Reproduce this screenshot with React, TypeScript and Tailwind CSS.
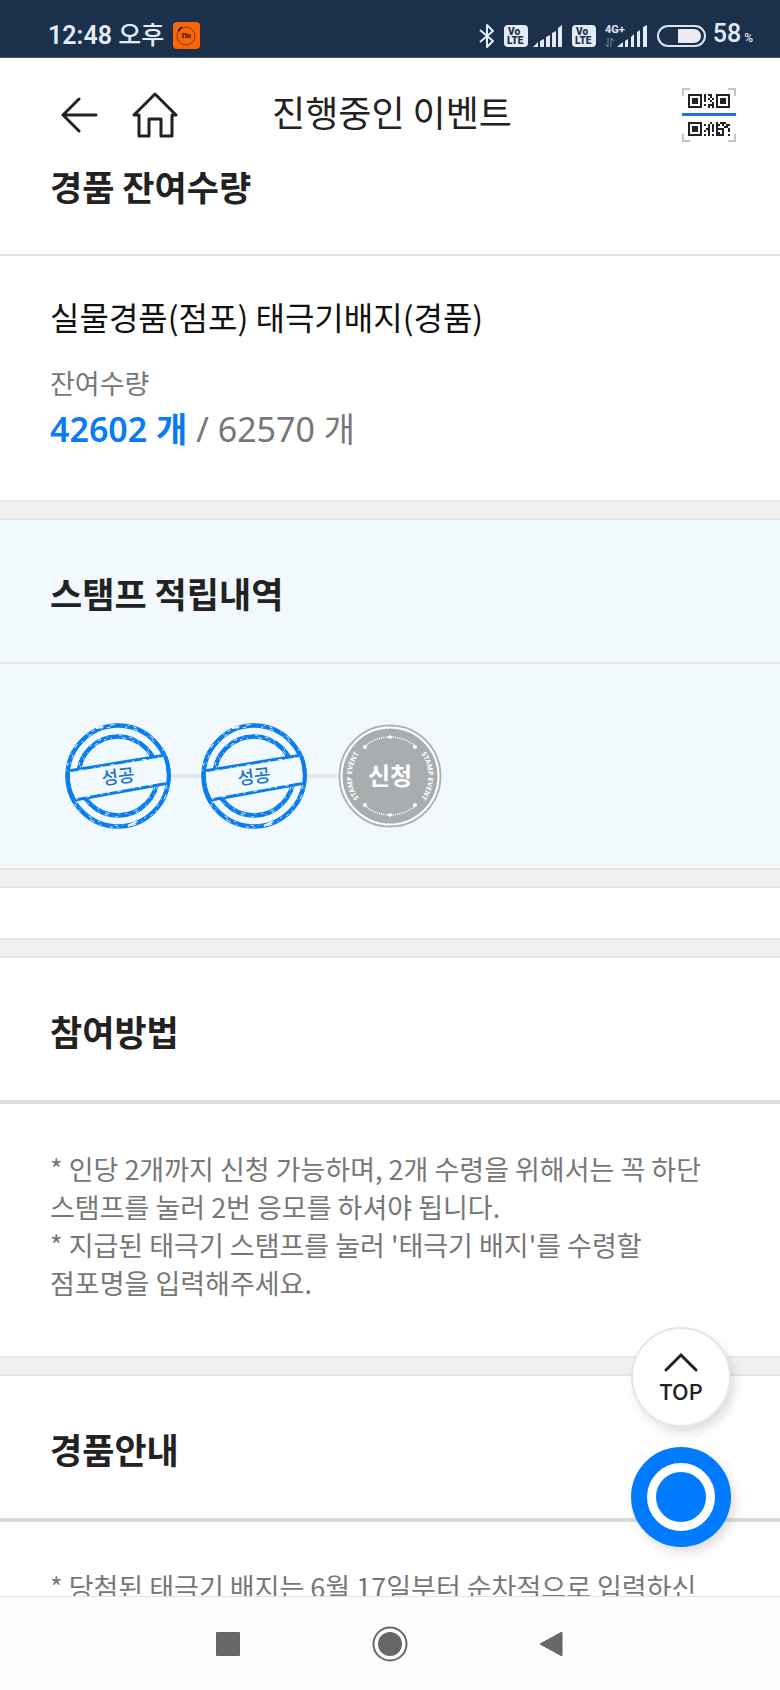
import React from 'react';

const QR_TOP = ['#.##.', '#..#.', '#.#.#', '#..#.', '....#', '#.###', '..#.#'];
const QR_BOTTOM = [
  '...#..#.###..',
  '#.#.#.##.#.##',
  '..#.#.#...##.',
  '.##.#.####..#',
  '#.#.#.#..#..#',
  '..#...##.#...',
  '#.#.#.####..#',
];

function modules(rows: string[], x: number, y: number) {
  return rows.flatMap((row, r) =>
    row
      .split('')
      .map((cell, c) =>
        cell === '#' ? (
          <rect key={`${r}-${c}`} x={x + c * 2} y={y + r * 2} width="2" height="2" />
        ) : null
      )
  );
}

function Finder({ x, y }: { x: number; y: number }) {
  return (
    <g>
      <rect x={x + 1} y={y + 1} width="12" height="12" fill="none" stroke="#222" strokeWidth="2" />
      <rect x={x + 4} y={y + 4} width="6" height="6" />
    </g>
  );
}

function QrIcon() {
  return (
    <svg width="54" height="54" viewBox="0 0 54 54" fill="#222">
      <path
        d="M8 1H1V8M46 1H53V8M8 53H1V46M46 53H53V46"
        fill="none"
        stroke="#c4c4c4"
        strokeWidth="2"
      />
      <Finder x={6} y={6} />
      <Finder x={34} y={6} />
      <Finder x={6} y={34} />
      {modules(QR_TOP, 22, 6)}
      {modules(QR_BOTTOM, 22, 34)}
      <rect x="0" y="25" width="54" height="3" fill="#1c75d8" />
    </svg>
  );
}

function BluetoothIcon() {
  return (
    <svg width="16" height="26" viewBox="0 0 16 26" fill="none" stroke="#e3ebf8" strokeWidth="2">
      <path d="M1 7L14 18L8 24V2L14 8L1 19" strokeLinejoin="round" />
    </svg>
  );
}

function VolteIcon() {
  return (
    <svg width="24" height="22" viewBox="0 0 24 22" fontFamily="Roboto, sans-serif" fontWeight="900">
      <rect width="24" height="22" rx="4" fill="#e3ebf8" />
      <text x="4" y="10" fontSize="10" fill="#1b304b">Vo</text>
      <text x="3" y="19" fontSize="10" fill="#1b304b">LTE</text>
    </svg>
  );
}

function SignalIcon() {
  return (
    <svg width="30" height="22" viewBox="0 0 30 22" fill="#e3ebf8">
      <path d="M0 22L5 17V22ZM7 16L11 14V22H7ZM13 12L17 10V22H13ZM19 8L23 6V22H19ZM25 3L29 0V22H25Z" />
    </svg>
  );
}

function BatteryIcon() {
  return (
    <svg width="50" height="24" viewBox="0 0 50 24">
      <rect x="1" y="2" width="47" height="20" rx="10" fill="none" stroke="#d9e3f3" strokeWidth="2" />
      <path d="M22 5H37A7 7 0 0 1 37 19H22A1 1 0 0 1 21 18V6A1 1 0 0 1 22 5Z" fill="#ebebf0" />
    </svg>
  );
}

function StatusBar() {
  return (
    <div className="flex h-[58px] shrink-0 items-center justify-between border-b border-[#4a5565] bg-[#1b304b] pt-[14px] pr-[27px] pl-[48px] font-[Roboto,'Noto_Sans_CJK_KR',sans-serif] text-[#e3ebf8]">
      <div className="flex items-center gap-[9px]">
        <span className="text-[25px] leading-[28px] font-semibold">
          12:48 <span className="font-medium">오후</span>
        </span>
        <svg width="27" height="27" viewBox="0 0 27 27">
          <rect width="27" height="27" rx="4" fill="#fb6503" />
          <circle cx="13" cy="14" r="9" fill="none" stroke="#7d3a1c" strokeWidth="1" />
          <path d="M5 9L9 5" stroke="#3b1c10" strokeWidth="2" />
          <path d="M10 16V12H13V16M15 16V12M17 16V12" stroke="#4a2010" strokeWidth="1.5" fill="none" />
        </svg>
      </div>
      <div className="flex items-center">
        <BluetoothIcon />
        <div className="ml-[9px] flex items-center gap-[5px]">
          <VolteIcon />
          <SignalIcon />
        </div>
        <div className="ml-[9px] flex items-center gap-[9px]">
          <VolteIcon />
          <svg width="43" height="25" viewBox="0 0 43 25" fill="#e3ebf8">
            <text x="0" y="10" fontSize="11" fontWeight="700" fontFamily="Roboto, sans-serif">4G+</text>
            <path d="M3 15V24L0 21M6 24V15L9 18" fill="none" stroke="#7f8da3" strokeWidth="1" />
            <path d="M12 24L18 19V24ZM20 18L23 16V24H20ZM26 14L29 11V24H26ZM32 9L35 7V24H32ZM38 4L42 2V24H38Z" />
          </svg>
        </div>
        <div className="ml-[9px] flex items-center gap-[6px]">
          <BatteryIcon />
          <span className="flex items-baseline gap-[3px] text-[25px] leading-[20px] font-medium">
            58<span className="text-[12px]">%</span>
          </span>
        </div>
      </div>
    </div>
  );
}

function AppHeader() {
  return (
    <header className="grid h-[114px] shrink-0 grid-cols-[1fr_auto_1fr] items-center bg-white pr-[44px] pl-[48px]">
      <div className="flex items-center gap-[34px] pl-[13px]">
        <button type="button" aria-label="뒤로">
          <svg width="37" height="36" viewBox="0 0 37 36" fill="none" stroke="#222" strokeWidth="3" strokeLinecap="round" strokeLinejoin="round">
            <path d="M18 2L2 18L18 34M2 18H35" />
          </svg>
        </button>
        <button type="button" aria-label="홈">
          <svg width="46" height="46" viewBox="0 0 46 46" fill="none" stroke="#222" strokeWidth="3" strokeLinejoin="round">
            <path d="M23 2L2 23H7V44H17V27H29V44H40V23H44Z" />
          </svg>
        </button>
      </div>
      <h1 className="pb-[8px] text-[36px] leading-[52px] font-normal text-[#222]">진행중인 이벤트</h1>
      <button type="button" aria-label="QR 스캔" className="justify-self-end">
        <QrIcon />
      </button>
    </header>
  );
}

function SectionTitle({ children }: { children: React.ReactNode }) {
  return (
    <h2 className="px-[50px] pt-[47px] pb-[43px] text-[35px] leading-[52px] font-bold text-[#222]">
      {children}
    </h2>
  );
}

function Band() {
  return <div className="h-[20px] border-y-2 border-[#e6e6e6] bg-[#f0f0f0]" />;
}

function SuccessStamp() {
  return (
    <svg width="106" height="106" viewBox="-53 -53 106 106" fill="none" role="img" aria-label="성공">
      <g stroke="#0a7cec">
        <circle r="50.5" strokeWidth="4.5" />
        <circle r="39.5" strokeWidth="4.5" />
      </g>
      {/* worn ink */}
      <g stroke="#f1f9fe">
        <circle r="51.5" strokeWidth="1" strokeDasharray="3 9 1 6 5 13 2 4" />
        <circle r="49.5" strokeWidth="1" strokeDasharray="2 7 4 11 1 5 3 15" />
        <circle r="40.5" strokeWidth="1" strokeDasharray="2 8 3 6 1 12" />
        <circle r="38.5" strokeWidth="1" strokeDasharray="1 10 4 7 2 5" />
        <path d="M14 -41L22 -36M-22 -48L-15 -49M10 50L18 46" strokeWidth="2" />
      </g>
      <path d="M-49 -5L47 -21L50 8L-43 24Z" fill="#f1f9fe" />
      <path d="M-50 -5L48 -21M-43 24L51 7" stroke="#0a7cec" strokeWidth="3" />
      <path
        d="M-49 -4L47 -20M-42 23L50 6"
        stroke="#f1f9fe"
        strokeWidth="1"
        strokeDasharray="2 8 4 12 1 5"
      />
      <path d="M47 -20A51 51 0 0 1 50 8M-50 -5A51 51 0 0 0 -44 24" stroke="#0a7cec" strokeWidth="4" />
      <text
        transform="rotate(-7)"
        y="7"
        textAnchor="middle"
        fontSize="18"
        fontWeight="500"
        fill="#1a72d0"
      >
        성공
      </text>
    </svg>
  );
}

function ApplyStamp() {
  return (
    <svg width="106" height="106" viewBox="-53 -53 106 106" fill="none">
      <circle r="50.5" fill="#fff" stroke="#b0b4b7" strokeWidth="2" />
      <circle r="47.5" fill="#a9adb0" />
      <g stroke="#fff" strokeWidth="1.5" strokeDasharray="1 1">
        <path d="M-25 -30A39 39 0 0 1 25 -30M-25 30A39 39 0 0 0 25 30" />
      </g>
      <g fill="#fff">
        <circle cx="-25" cy="-29" r="2" />
        <circle cx="25" cy="-29" r="2" />
        <circle cx="-25" cy="29" r="2" />
        <circle cx="25" cy="29" r="2" />
        <path d="M-3 -39L0 -41L3 -39L0 -37ZM-3 39L0 41L3 39L0 37Z" />
      </g>
      <path id="stamp-left" d="M-23 30A37 37 0 0 1 -23 -30" />
      <path id="stamp-right" d="M23 -30A37 37 0 0 1 23 30" />
      <g fill="#fff" fontSize="7" fontWeight="700" fontFamily="'Noto Sans', sans-serif" textAnchor="middle">
        <text>
          <textPath href="#stamp-left" startOffset="50%">STAMP EVENT</textPath>
        </text>
        <text>
          <textPath href="#stamp-right" startOffset="50%">STAMP EVENT</textPath>
        </text>
      </g>
      <text y="9" textAnchor="middle" fontSize="24" fontWeight="700" fill="#fff">
        신청
      </text>
    </svg>
  );
}

function Connector() {
  return <div className="h-[4px] w-[30px] bg-[#e3e8ec]" />;
}

function FloatingButtons() {
  return (
    <div className="absolute right-[49px] bottom-[49px] flex flex-col gap-[20px]">
      <button
        type="button"
        className="flex size-[100px] flex-col items-center justify-center rounded-full border-2 border-[#e6e6e6] bg-white pt-[2px] text-[#222] shadow-[4px_6px_10px_rgba(0,0,0,0.12)]"
      >
        <svg width="34" height="20" viewBox="0 0 34 20" fill="none" stroke="#222" strokeWidth="3" strokeLinecap="round">
          <path d="M2 18L17 3L32 18" />
        </svg>
        <span className="mt-[4px] text-[22px] leading-[28px] font-medium">TOP</span>
      </button>
      <button
        type="button"
        aria-label="메뉴"
        className="flex size-[100px] items-center justify-center rounded-full bg-[#007bff] shadow-[4px_6px_10px_rgba(0,0,0,0.12)]"
      >
        <span className="size-[68px] rounded-full border-9 border-white" />
      </button>
    </div>
  );
}

function NavBar() {
  return (
    <nav className="flex h-[94px] shrink-0 items-center justify-center gap-[114px] border-t border-[#e0e0e0] bg-[#fefefe]">
      <button type="button" aria-label="최근 앱" className="flex size-[48px] items-center justify-center">
        <svg width="24" height="24" viewBox="0 0 24 24">
          <rect width="24" height="24" rx="1" fill="#666" />
        </svg>
      </button>
      <button type="button" aria-label="홈 화면" className="flex size-[48px] items-center justify-center">
        <svg width="36" height="36" viewBox="0 0 36 36">
          <circle cx="18" cy="18" r="16.5" fill="none" stroke="#666" strokeWidth="2" />
          <circle cx="18" cy="18" r="12" fill="#666" />
        </svg>
      </button>
      <button type="button" aria-label="이전" className="flex size-[48px] items-center justify-center">
        <svg width="26" height="26" viewBox="0 0 26 26">
          <path d="M1 13L23 1V25Z" fill="#666" stroke="#666" strokeWidth="1" strokeLinejoin="round" />
        </svg>
      </button>
    </nav>
  );
}

export default function App() {
  return (
    <div className="flex h-screen flex-col bg-white font-['Noto_Sans_CJK_KR','Noto_Sans',sans-serif]">
      <StatusBar />
      <AppHeader />

      <div className="relative min-h-0 flex-1">
        <main className="h-full overflow-hidden">
          <section>
            <h2 className="px-[50px] pb-[54px] text-[35px] leading-[28px] font-bold text-[#222]">
              경품 잔여수량
            </h2>
            <div className="border-t-2 border-[#e0e0e0] px-[50px] pt-[38px] pb-[46px]">
              <h3 className="text-[32px] leading-[44px] text-[#111]">실물경품(점포) 태극기배지(경품)</h3>
              <p className="mt-[26px] text-[27px] leading-[38px] text-[#777]">잔여수량</p>
              <p className="mt-[2px] font-['Noto_Sans','Noto_Sans_CJK_KR',sans-serif] text-[34px] leading-[50px] text-[#777]">
                <strong className="font-semibold text-[#0a7bf5]">42602 개</strong> / 62570 개
              </p>
            </div>
          </section>
          <Band />

          <section className="bg-[#f1f9fe]">
            <SectionTitle>스탬프 적립내역</SectionTitle>
            <div className="flex items-center border-t-2 border-[#e3e8ec] px-[65px] pt-[59px] pb-[39px]">
              <SuccessStamp />
              <Connector />
              <SuccessStamp />
              <Connector />
              <button type="button" aria-label="신청">
                <ApplyStamp />
              </button>
            </div>
          </section>
          <Band />
          <div className="h-[50px]" />
          <Band />

          <section>
            <SectionTitle>참여방법</SectionTitle>
            <div className="border-t-4 border-[#dcdcdc] px-[50px] pt-[46px] pb-[54px] text-[27px] leading-[38px] text-[#777]">
              <p>
                * 인당 2개까지 신청 가능하며, 2개 수령을 위해서는 꼭 하단
                <br />
                스탬프를 눌러 2번 응모를 하셔야 됩니다.
              </p>
              <p>
                * 지급된 태극기 스탬프를 눌러 '태극기 배지'를 수령할
                <br />
                점포명을 입력해주세요.
              </p>
            </div>
          </section>
          <Band />

          <section>
            <SectionTitle>경품안내</SectionTitle>
            <div className="border-t-4 border-[#dcdcdc] px-[50px] pt-[46px] text-[27px] leading-[38px] text-[#777]">
              <p>* 당첨된 태극기 배지는 6월 17일부터 순차적으로 입력하신</p>
            </div>
          </section>
        </main>
        <FloatingButtons />
      </div>

      <NavBar />
    </div>
  );
}
